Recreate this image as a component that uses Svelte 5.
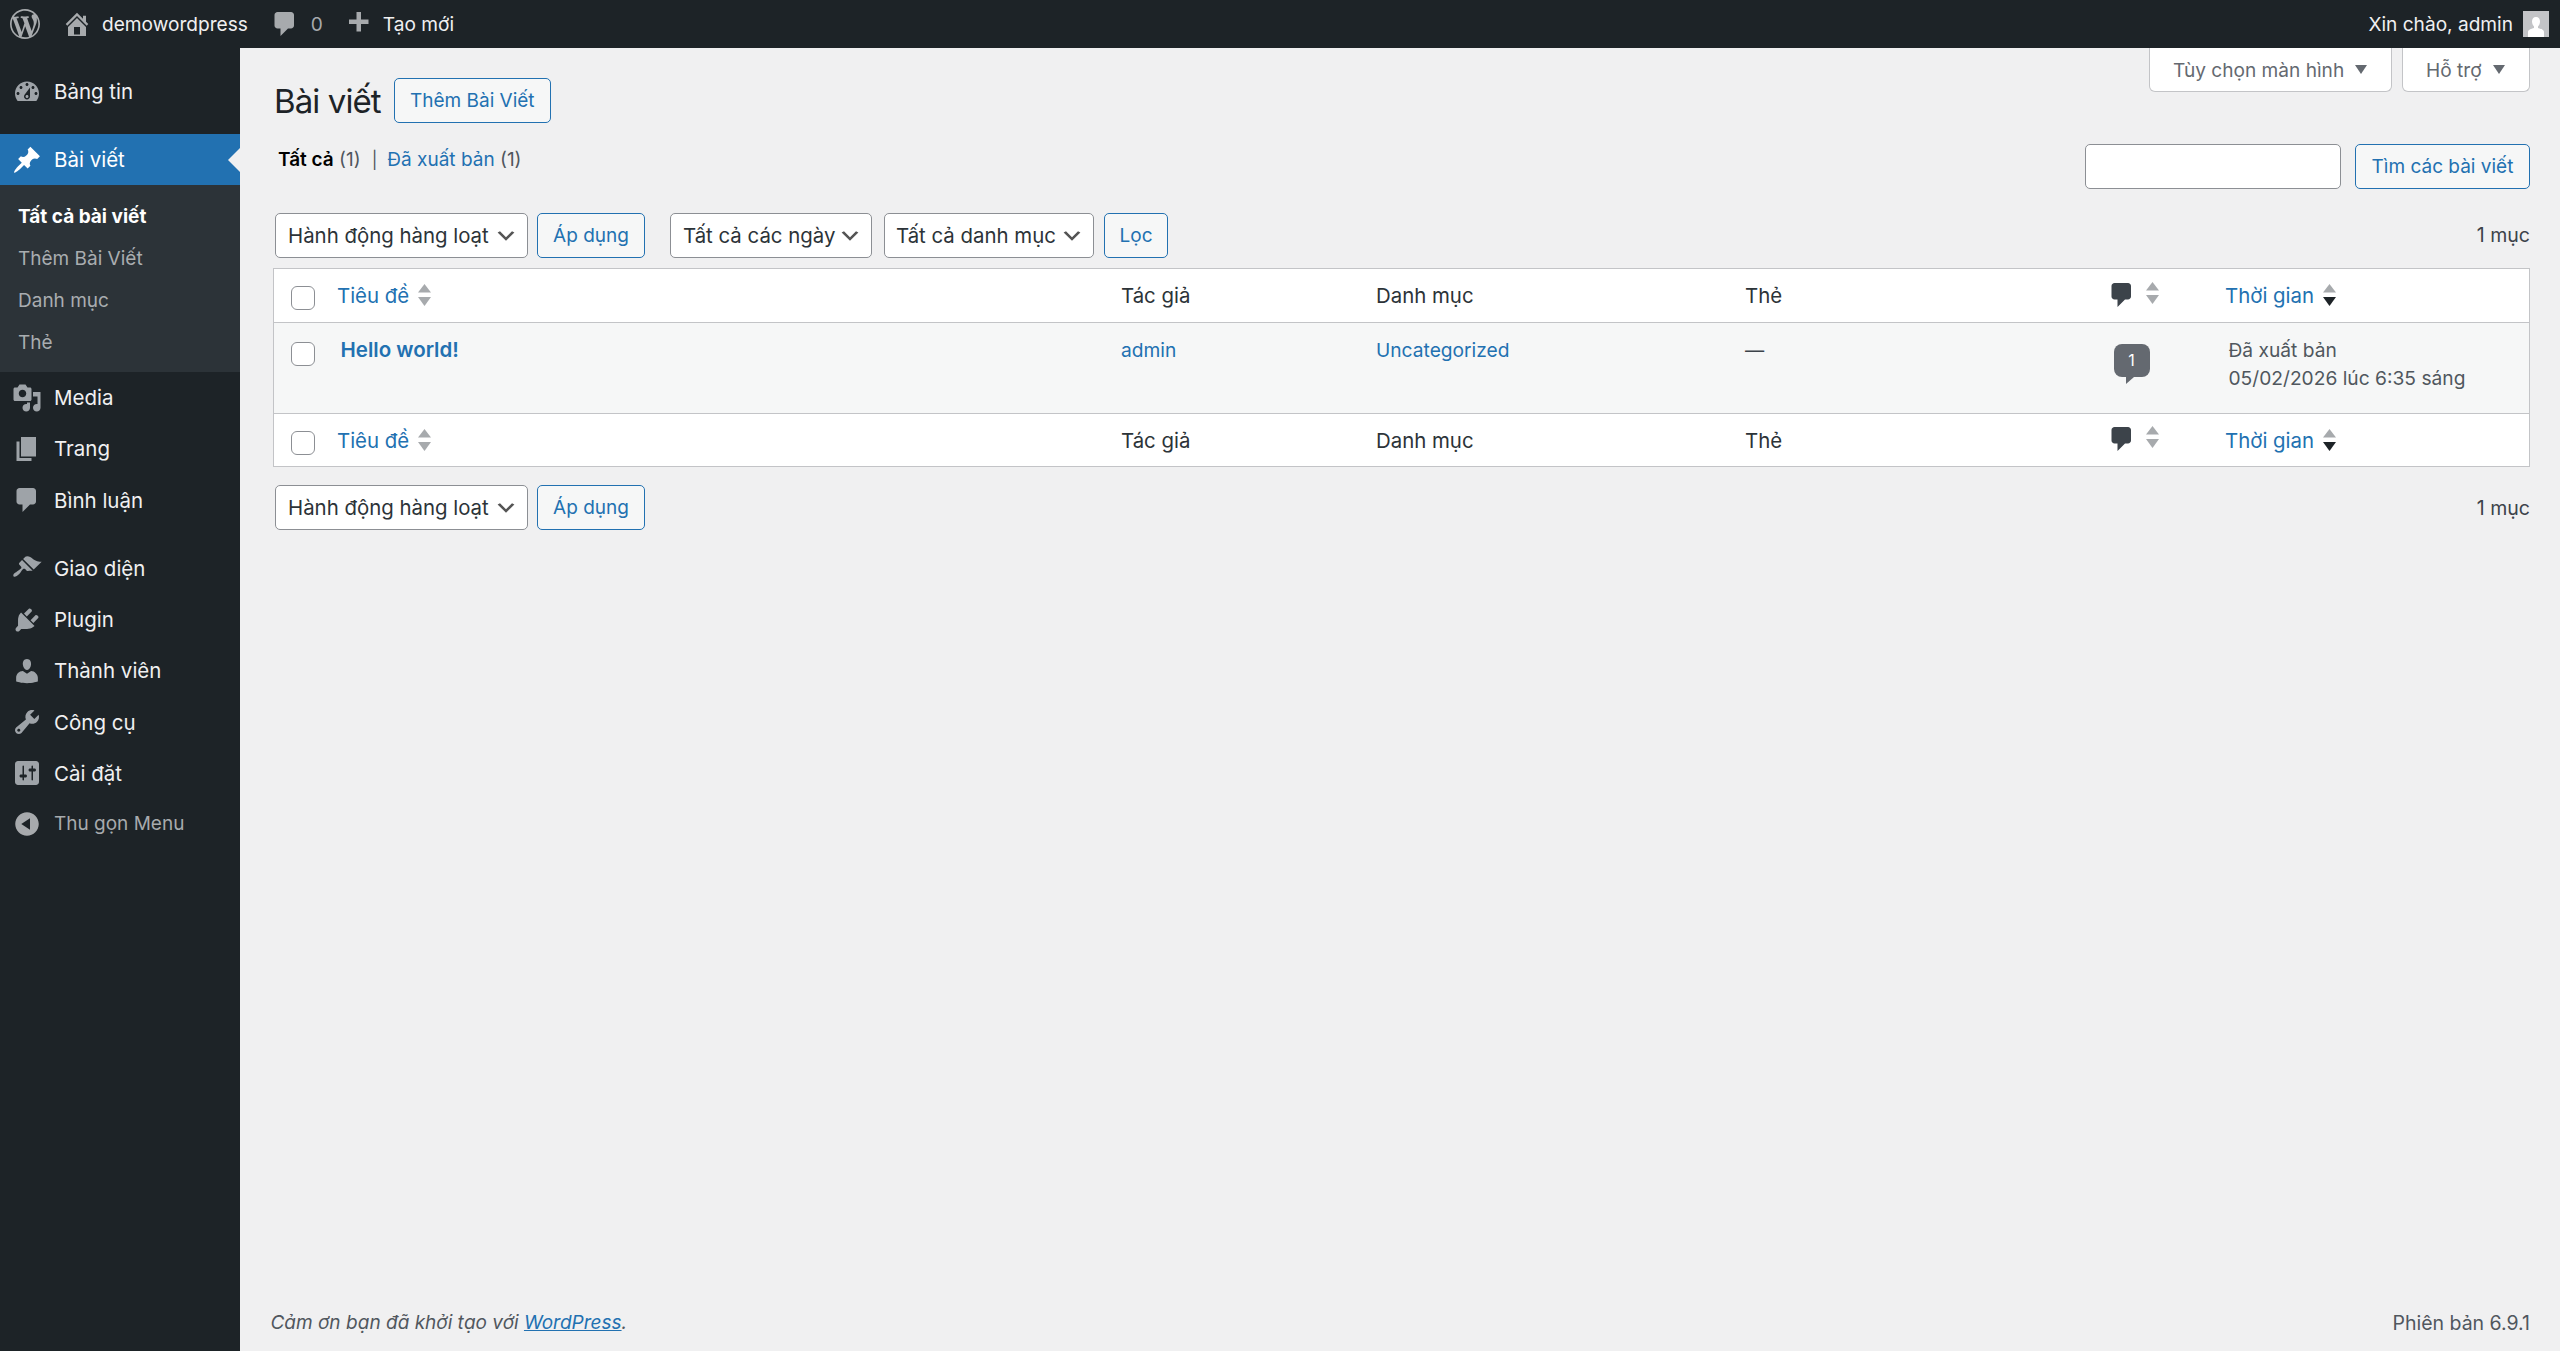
<script>
  const icons = {
    dashboard: "M3.76 16h12.48c1.1-1.37 1.76-3.11 1.76-5 0-4.42-3.58-8-8-8s-8 3.58-8 8c0 1.89.66 3.63 1.76 5zM10 4c.55 0 1 .45 1 1s-.45 1-1 1-1-.45-1-1 .45-1 1-1zM6 6c.55 0 1 .45 1 1s-.45 1-1 1-1-.45-1-1 .45-1 1-1zm8 0c.55 0 1 .45 1 1s-.45 1-1 1-1-.45-1-1 .45-1 1-1zm-5.37 5.55L12 7v6c0 1.1-.9 2-2 2s-2-.9-2-2c0-.57.24-1.08.63-1.45zM4 10c.55 0 1 .45 1 1s-.45 1-1 1-1-.45-1-1 .45-1 1-1zm12 0c.55 0 1 .45 1 1s-.45 1-1 1-1-.45-1-1 .45-1 1-1zm-5 3c0-.55-.45-1-1-1s-1 .45-1 1 .45 1 1 1 1-.45 1-1z",
    post: "M10.44 3.02l1.82-1.82 6.36 6.35-1.83 1.82c-1.05-.68-2.48-.57-3.41.36l-.75.75c-.92.93-1.04 2.35-.35 3.41l-1.83 1.82-2.41-2.41-2.8 2.79c-.42.42-3.38 2.71-3.8 2.29s1.86-3.39 2.28-3.81l2.79-2.79L4.1 9.36l1.83-1.82c1.05.69 2.48.57 3.4-.36l.75-.75c.93-.92 1.05-2.35.36-3.41z",
    media: "M13 11V4c0-.55-.45-1-1-1h-1.67L9 1H5L3.67 3H2c-.55 0-1 .45-1 1v7c0 .55.45 1 1 1h10c.55 0 1-.45 1-1zM7 4.5c1.38 0 2.5 1.12 2.5 2.5S8.38 9.5 7 9.5 4.5 8.38 4.5 7 5.62 4.5 7 4.5zM14 6h5v10.5c0 1.38-1.12 2.5-2.5 2.5S14 17.88 14 16.5s1.12-2.5 2.5-2.5c.17 0 .34.02.5.05V9h-3V6zm-4 8.05V13h2v3.5c0 1.38-1.12 2.5-2.5 2.5S7 17.88 7 16.5 8.12 14 9.5 14c.17 0 .34.02.5.05z",
    page: "M6 15V2h10v13H6zm-1 1h8v2H3V5h2v11z",
    comments: "M5 2h9c1.1 0 2 .9 2 2v7c0 1.1-.9 2-2 2h-2l-5 5v-5H5c-1.1 0-2-.9-2-2V4c0-1.1.9-2 2-2z",
    appearance: "M14.48 11.06L7.41 3.99l1.5-1.5c.5-.56 2.3-.47 3.51.32 1.21.8 1.43 1.28 2.91 2.1 1.18.64 2.45 1.26 4.45.85zm-.71.71L6.7 4.7 4.93 6.47c-.39.39-.39 1.02 0 1.41l1.06 1.06c.39.39.39 1.03 0 1.42-.6.6-1.43 1.11-2.21 1.69-.35.26-.7.53-1.01.84C1.43 13.23.4 14.91 1.1 15.6c.7.7 2.38-.33 3.72-1.67.31-.31.58-.66.84-1.01.58-.78 1.09-1.61 1.69-2.21.39-.39 1.02-.39 1.41 0l1.06 1.06c.39.39 1.02.39 1.41 0z",
    plugins: "M13.11 4.36L9.87 7.6 8 5.73l3.24-3.24c.35-.34 1.05-.2 1.56.32.52.51.66 1.21.31 1.55zm-8 1.77l.91-1.12 9.01 9.01-1.19.84c-.71.71-2.63 1.16-3.82 1.16H6.14L4.9 17.26c-.59.59-1.54.59-2.12 0-.59-.58-.59-1.53 0-2.12l1.24-1.24v-3.88c0-1.13.4-3.19 1.09-3.89zm7.26 3.97l3.24-3.24c.34-.35 1.04-.21 1.55.31.52.51.66 1.21.31 1.55l-3.24 3.25z",
    users: "M10 9.25c-2.27 0-2.73-3.44-2.73-3.44C7 4.02 7.82 2 9.97 2c2.16 0 2.98 2.02 2.71 3.81 0 0-.41 3.44-2.68 3.44zm0 2.57L12.72 10c2.39 0 4.52 2.33 4.52 4.53v2.49s-3.65 1.13-7.24 1.13c-3.65 0-7.24-1.13-7.24-1.13v-2.49c0-2.25 1.94-4.48 4.47-4.48z",
    tools: "M16.68 9.77c-1.34 1.34-3.3 1.67-4.95.99l-5.41 6.52c-.99.99-2.59.99-3.58 0s-.99-2.59 0-3.57l6.52-5.42c-.68-1.65-.35-3.61.99-4.95 1.28-1.28 3.12-1.62 4.72-1.06l-2.89 2.89 2.82 2.82 2.86-2.87c.53 1.58.18 3.39-1.08 4.65zM3.81 16.21c.4.39 1.04.39 1.43 0 .4-.4.4-1.04 0-1.43-.39-.4-1.03-.4-1.43 0-.39.39-.39 1.03 0 1.43z",
    settings: "M18 16V4c0-1.1-.9-2-2-2H4c-1.1 0-2 .9-2 2v12c0 1.1.9 2 2 2h12c1.1 0 2-.9 2-2zM8 11h1c.55 0 1 .45 1 1s-.45 1-1 1H8v1.5c0 .28-.22.5-.5.5s-.5-.22-.5-.5V13H6c-.55 0-1-.45-1-1s.45-1 1-1h1V5.5c0-.28.22-.5.5-.5s.5.22.5.5V11zm5-2h-1c-.55 0-1-.45-1-1s.45-1 1-1h1V5.5c0-.28.22-.5.5-.5s.5.22.5.5V7h1c.55 0 1 .45 1 1s-.45 1-1 1h-1v5.5c0 .28-.22.5-.5.5s-.5-.22-.5-.5V9z",
    collapse: "M10 2.16c4.33 0 7.84 3.51 7.84 7.84s-3.51 7.84-7.84 7.84S2.16 14.33 2.16 10 5.71 2.16 10 2.16zm2 11.72V6.12L6.18 9.97z",
    home: "M16 8.5l1.53 1.53-1.06 1.06L10 4.62l-6.47 6.47-1.06-1.06L10 2.5l4 4v-2h2v4zm-6-2.46l6 5.99V18H4v-5.97zM12 17v-5H8v5h4z",
    wp: "M20 10c0-5.51-4.49-10-10-10C4.48 0 0 4.49 0 10c0 5.52 4.48 10 10 10 5.51 0 10-4.48 10-10zM7.78 15.37L4.37 6.22c.55-.02 1.17-.08 1.17-.08.5-.06.44-1.13-.06-1.11 0 0-1.45.11-2.37.11-.18 0-.37 0-.58-.01C4.12 2.69 6.87 1.11 10 1.11c2.33 0 4.45.87 6.05 2.34-.68-.11-1.65.39-1.65 1.58 0 .74.45 1.36.9 2.1.35.61.55 1.36.55 2.46 0 1.49-1.4 5-1.4 5l-3.03-8.37c.54-.02.82-.17.82-.17.5-.05.44-1.25-.06-1.22 0 0-1.44.12-2.38.12-.87 0-2.33-.12-2.33-.12-.5-.03-.56 1.2-.06 1.22l.92.08 1.26 3.41zM17.41 10c.24-.64.74-1.87.43-4.25.7 1.29 1.05 2.71 1.05 4.25 0 3.29-1.73 6.24-4.4 7.78.97-2.59 1.94-5.2 2.92-7.78zM6.1 18.09C3.12 16.65 1.11 13.53 1.11 10c0-1.3.23-2.48.72-3.59C3.25 10.3 4.67 14.2 6.1 18.09zm4.03-6.63l2.58 6.98c-.86.29-1.76.45-2.71.45-.79 0-1.57-.11-2.29-.33.81-2.38 1.62-4.74 2.42-7.1z",
    plus: "M17 7v3h-5v5H9v-5H4V7h5V2h3v5h5z"
  };
  const groupA = [{ i: "media", t: "Media" }, { i: "page", t: "Trang" }, { i: "comments", t: "Bình luận" }];
  const groupB = [
    { i: "appearance", t: "Giao diện" },
    { i: "plugins", t: "Plugin" },
    { i: "users", t: "Thành viên" },
    { i: "tools", t: "Công cụ" },
    { i: "settings", t: "Cài đặt" }
  ];
  const subs = ["Tất cả bài viết", "Thêm Bài Viết", "Danh mục", "Thẻ"];
</script>

{#snippet icon(name, cls = "")}
  <svg class="ic {cls}" viewBox="0 0 20 20" aria-hidden="true"><path fill-rule="evenodd" d={icons[name]} /></svg>
{/snippet}

{#snippet sort(active = false)}
  <svg class="sort" class:active viewBox="0 0 13 22" aria-hidden="true">
    <polygon class="up" points="6.5,0 13,8.5 0,8.5" />
    <polygon class="down" points="0,13 13,13 6.5,22" />
  </svg>
{/snippet}

{#snippet headcells()}
  <th class="c-cb"><input type="checkbox" class="cb" /></th>
  <th class="c-title"><a href="#t" class="hl">Tiêu đề {@render sort()}</a></th>
  <th>Tác giả</th>
  <th>Danh mục</th>
  <th>Thẻ</th>
  <th class="c-com"><span class="hl">{@render icon("comments", "com-ic")}{@render sort()}</span></th>
  <th class="c-time"><a href="#d" class="hl">Thời gian {@render sort(true)}</a></th>
{/snippet}

<header class="bar">
  <a class="bar-wp" href="#w">{@render icon("wp")}</a>
  <a class="bar-site" href="#s">{@render icon("home")}<span>demowordpress</span></a>
  <a class="bar-com" href="#c">{@render icon("comments")}<span>0</span></a>
  <a class="bar-new" href="#n">{@render icon("plus")}<span>Tạo mới</span></a>
  <a class="bar-me" href="#m">
    <span>Xin chào, admin</span>
    <svg class="avatar" viewBox="0 0 26 26" aria-hidden="true">
      <rect width="26" height="26" fill="#c3c4c7" />
      <path fill="#fff" d="M13 6c2.6 0 4 2 4 4.400 0 2-1 4-2 5v1.600c3 .8 6 1.900 6 4v5H5v-5c0-2.100 3-3.200 6-4v-1.600c-1-1-2-3-2-5C9 8 10.400 6 13 6z" />
    </svg>
  </a>
</header>

<div class="shell">
  <nav class="side">
    <a class="item first" href="#b">{@render icon("dashboard")}<span>Bảng tin</span></a>
    <a class="item current" href="#p">{@render icon("post")}<span>Bài viết</span></a>
    <ul class="sub">
      {#each subs as s, n}
        <li class:on={n === 0}>{s}</li>
      {/each}
    </ul>
    {#each groupA as g}
      <a class="item" href="#g">{@render icon(g.i)}<span>{g.t}</span></a>
    {/each}
    <div class="sep"></div>
    {#each groupB as g}
      <a class="item" href="#g">{@render icon(g.i)}<span>{g.t}</span></a>
    {/each}
    <div class="collapse">{@render icon("collapse")}<span>Thu gọn Menu</span></div>
  </nav>

  <main class="content">
    <div class="wrap">
      <div class="meta">
        <button class="tab t1">Tùy chọn màn hình<i></i></button>
        <button class="tab t2">Hỗ trợ<i></i></button>
      </div>

      <div class="head">
        <h1>Bài viết</h1>
        <a class="btn add" href="#a">Thêm Bài Viết</a>
      </div>

      <div class="filters">
        <div class="subsub">
          <b>Tất cả</b> <span class="n">(1)</span><span class="pipe">|</span><a href="#x">Đã xuất bản</a> <span class="n">(1)</span>
        </div>
        <div class="search">
          <input type="search" aria-label="Tìm" />
          <button class="btn">Tìm các bài viết</button>
        </div>
      </div>

      <div class="tools top">
        <select class="s1"><option>Hành động hàng loạt</option></select>
        <button class="btn apply">Áp dụng</button>
        <select class="s2"><option>Tất cả các ngày</option></select>
        <select class="s3"><option>Tất cả danh mục</option></select>
        <button class="btn filter">Lọc</button>
        <span class="count">1 mục</span>
      </div>

      <table>
        <colgroup>
          <col class="w-cb" /><col class="w-title" /><col class="w-author" /><col class="w-cat" /><col class="w-tag" /><col class="w-com" /><col />
        </colgroup>
        <thead><tr>{@render headcells()}</tr></thead>
        <tbody>
          <tr>
            <td class="c-cb"><input type="checkbox" class="cb" /></td>
            <td class="c-title"><a href="#h">Hello world!</a></td>
            <td><a href="#u">admin</a></td>
            <td><a href="#k">Uncategorized</a></td>
            <td>—</td>
            <td class="c-com"><span class="bubble">1</span></td>
            <td class="c-date">Đã xuất bản<br />05/02/2026 lúc 6:35 sáng</td>
          </tr>
        </tbody>
        <tfoot><tr>{@render headcells()}</tr></tfoot>
      </table>

      <div class="tools bottom">
        <select class="s1"><option>Hành động hàng loạt</option></select>
        <button class="btn apply">Áp dụng</button>
        <span class="count">1 mục</span>
      </div>
    </div>

    <footer class="foot">
      <em>Cảm ơn bạn đã khởi tạo với <a href="#wp">WordPress</a>.</em>
      <span class="ver">Phiên bản 6.9.1</span>
    </footer>
  </main>
</div>

<style>
  :global(body) {
    margin: 0;
    background: #f0f0f1;
    font-family: Inter, "Noto Sans", sans-serif;
    font-size: 19.5px;
    color: #3c434a;
  }
  a { color: #2271b1; text-decoration: none; }
  .ic { width: 30px; height: 30px; flex: none; fill: currentColor; display: block; }

  .bar {
    height: 48px;
    background: #1d2327;
    display: flex;
    align-items: center;
    color: #f0f0f1;
    font-size: 19.100px;
  }
  .bar a { color: #f0f0f1; display: flex; align-items: center; }
  .bar .ic { color: #a7aaad; }
  .bar-wp { margin-left: 10px; }
  .bar-site { margin-left: 22px; gap: 10px; }
  .bar-com { margin-left: 22px; gap: 11px; }
  .bar-com span { color: #a7aaad; }
  .bar-new { margin-left: 20px; gap: 10px; }
  .bar-me { margin-left: auto; gap: 10px; padding-right: 11px; }
  .avatar { width: 26px; height: 26px; display: block; }

  .shell { display: flex; min-height: 1303px; }
  .side { width: 240px; flex: none; background: #1d2327; display: flex; flex-direction: column; }
  .item {
    height: 51.250px;
    flex: none;
    display: flex;
    align-items: center;
    gap: 12px;
    padding-left: 12px;
    color: #f0f0f1;
    font-size: 20.500px;
    position: relative;
  }
  .item .ic { color: #9ea3a8; }
  .first { margin-top: 18px; margin-bottom: 16.750px; }
  .current { background: #2271b1; color: #fff; height: 51px; }
  .current .ic { color: #fff; }
  .current::after {
    content: "";
    position: absolute;
    right: 0;
    top: 50%;
    margin-top: -12px;
    border: 12px solid transparent;
    border-left-width: 0;
    border-right-color: #f0f0f1;
  }
  .sub {
    list-style: none;
    margin: 0;
    padding: 11px 0 8px 18px;
    background: #2c3338;
    color: #a9adb0;
    font-size: 19px;
  }
  .sub li { height: 42px; line-height: 42px; }
  .sub .on { color: #fff; font-weight: 700; }
  .sep { height: 17px; flex: none; }
  .collapse {
    height: 49.500px;
    display: flex;
    align-items: center;
    gap: 12px;
    padding-left: 12px;
    color: #a7aaad;
    font-size: 19px;
  }

  .content { flex: 1; min-width: 0; display: flex; flex-direction: column; }
  .wrap { padding: 0 30px 0 33px; }

  .meta { display: flex; justify-content: flex-end; gap: 10px; height: 44px; }
  .tab {
    font: inherit;
    font-size: 19.100px;
    color: #646970;
    background: #fff;
    border: 1px solid #c3c4c7;
    border-top: 0;
    border-radius: 0 0 6px 6px;
    padding: 0 0 0 23px;
    display: flex;
    align-items: center;
    box-sizing: border-box;
  }
  .tab i {
    width: 0;
    height: 0;
    margin-left: 11px;
    border: 6px solid transparent;
    border-top: 9px solid #646970;
    border-bottom: 0;
  }
  .t1 { width: 243px; }
  .t2 { width: 128px; }

  .head { display: flex; align-items: center; margin-top: -14px; height: 45px; gap: 13px; padding-left: 1px; }
  h1 { margin: 0; font-size: 33px; font-weight: 400; color: #1d2327; letter-spacing: -0.900px; }

  .btn {
    box-sizing: border-box;
    height: 45px;
    display: inline-flex;
    align-items: center;
    justify-content: center;
    font: inherit;
    font-size: 19px;
    color: #2271b1;
    background: #f6f7f7;
    border: 1.500px solid #2271b1;
    border-radius: 5px;
    padding: 0;
  }
  .add { width: 157px; }

  .filters { display: flex; justify-content: space-between; align-items: flex-start; margin-top: 20.500px; padding-left: 5px; }
  .subsub { line-height: 30px; margin-top: 1.500px; font-size: 19px; color: #50575e; }
  .subsub b { color: #000; font-weight: 600; }
  .pipe { margin: 0 10px 0 11px; color: #50575e; font-size: 17px; }
  .search { display: flex; gap: 14px; }
  .search input {
    box-sizing: border-box;
    width: 256px;
    height: 45px;
    background: #fff;
    border: 1.500px solid #8c8f94;
    border-radius: 5px;
    padding: 0;
  }
  .search .btn { width: 175px; }

  .tools { display: flex; align-items: center; height: 45px; padding-left: 2px; }
  .top { margin-top: 24px; }
  .bottom { margin-top: 18px; }
  select {
    box-sizing: border-box;
    appearance: none;
    height: 45px;
    font: inherit;
    font-size: 20.400px;
    color: #2c3338;
    background: #fff url("data:image/svg+xml,%3Csvg xmlns='http://www.w3.org/2000/svg' viewBox='0 0 20 20'%3E%3Cpath d='M5 6l5 5 5-5 2 1-7 7-7-7 2-1z' fill='%23555'/%3E%3C/svg%3E") no-repeat right 9px top 55% / 24px 24px;
    border: 1.500px solid #8c8f94;
    border-radius: 5px;
    padding: 0 30px 0 12px;
  }
  .s1 { width: 253px; }
  .s2 { width: 202px; margin-left: 25px; }
  .s3 { width: 210px; margin-left: 12px; padding-left: 11px; }
  .apply { width: 108px; margin-left: 9px; }
  .filter { width: 64px; margin-left: 10px; }
  .count { margin-left: auto; font-size: 19.500px; color: #3c434a; }

  table {
    box-sizing: border-box;
    width: 100%;
    table-layout: fixed;
    border-collapse: separate;
    border-spacing: 0;
    background: #fff;
    border: 1px solid #c3c4c7;
    margin-top: 10.500px;
    font-size: 19.200px;
  }
  .w-cb { width: 51px; }
  .w-title { width: 785px; }
  .w-author { width: 255px; }
  .w-cat { width: 369px; }
  .w-tag { width: 366px; }
  .w-com { width: 113px; }

  th, td { box-sizing: border-box; text-align: left; padding: 0 12px 0 11px; font-weight: 400; }
  th { height: 54px; color: #2c3338; font-size: 20.400px; }
  thead th { border-bottom: 1px solid #c3c4c7; }
  tfoot th { border-top: 1px solid #c3c4c7; height: 53px; }
  td { height: 90px; vertical-align: top; background: #f6f7f7; padding-top: 13px; line-height: 28.500px; }
  td.c-cb { padding-top: 14px; }
  th.c-cb, td.c-cb { padding-left: 17px; padding-right: 0; }
  th.c-title { padding-left: 12px; }
  td.c-title { padding-left: 15.500px; padding-top: 12.500px; font-size: 20.500px; font-weight: 600; }
  th.c-com { padding-left: 11.500px; }
  td.c-com { padding-top: 21px; padding-left: 13.500px; }
  th.c-time { padding-left: 12px; }
  td.c-date { padding-left: 15.500px; color: #50575e; padding-top: 12.500px; }

  .cb {
    appearance: none;
    box-sizing: border-box;
    width: 24px;
    height: 24px;
    margin: 5px 0 0;
    display: block;
    background: #fff;
    border: 1.500px solid #8c8f94;
    border-radius: 6px;
  }
  .hl { display: inline-flex; align-items: center; gap: 8.500px; color: #2271b1; }
  .hl .sort { margin-top: -1px; }
  .sort { width: 13px; height: 22px; display: block; fill: #a7aaad; flex: none; }
  .sort.active .down { fill: #1d2327; }
  .com-ic { color: #3c434a; margin-right: -9px; margin-left: -4.500px; margin-top: 3px; }
  .hl .com-ic + .sort { margin-left: 9.500px; }

  .bubble {
    position: relative;
    display: block;
    box-sizing: border-box;
    width: 36px;
    height: 33px;
    line-height: 33px;
    background: #646970;
    border-radius: 8px;
    color: #fff;
    text-align: center;
    font-size: 16px;
  }
  .bubble::after {
    content: "";
    position: absolute;
    left: 12px;
    top: 33px;
    border-top: 7px solid #646970;
    border-right: 8px solid transparent;
  }

  .foot {
    margin-top: auto;
    display: flex;
    justify-content: space-between;
    padding: 0 30px 14px 30.500px;
    line-height: 28px;
    font-size: 19px;
    color: #50575e;
  }
  .ver { font-size: 19.500px; }
  .foot a { text-decoration: underline; }
</style>
